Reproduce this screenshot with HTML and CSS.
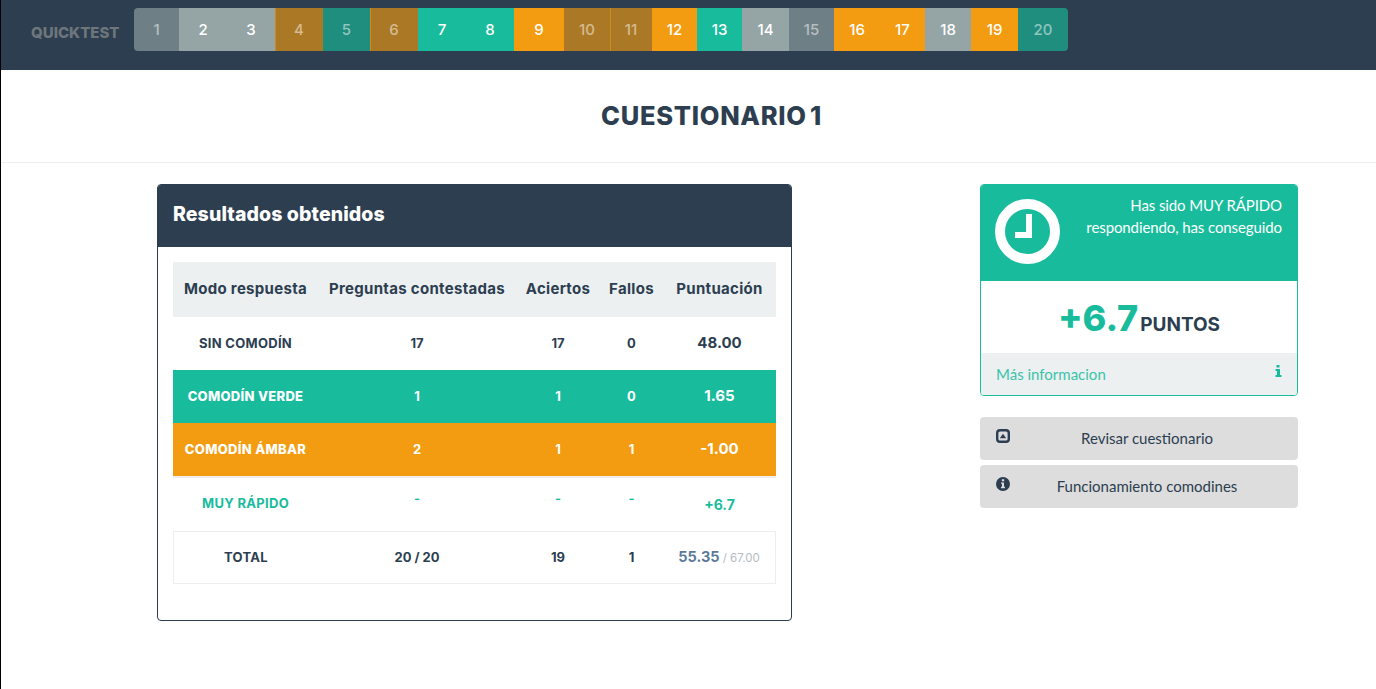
FILE: index.html
```html
<!DOCTYPE html>
<html lang="es">
<head>
<meta charset="utf-8">
<title>Quicktest</title>
<link rel="stylesheet" href="styles.css">
</head>
<body>
<div class="page">
  <header class="topbar">
    <div class="brand">QUICKTEST</div>
    <nav class="steps">
      <a class="step grey dim">1</a><a class="step grey">2</a><a class="step grey">3</a><a class="step amber dim edge">4</a><a class="step teal dim">5</a><a class="step amber dim edge">6</a><a class="step teal">7</a><a class="step teal">8</a><a class="step amber">9</a><a class="step amber dim">10</a><a class="step amber dim edge">11</a><a class="step amber">12</a><a class="step teal">13</a><a class="step grey">14</a><a class="step grey dim">15</a><a class="step amber">16</a><a class="step amber">17</a><a class="step grey">18</a><a class="step amber">19</a><a class="step teal dim">20</a>
    </nav>
  </header>
  <div class="title-wrap"><h1 class="title">CUESTIONARIO 1</h1></div>
  <main class="content">
    <section class="panel">
      <h2 class="panel-head">Resultados obtenidos</h2>
      <div class="panel-body">
        <table class="results">
          <thead>
            <tr><th class="c1">Modo respuesta</th><th class="c2">Preguntas contestadas</th><th class="c3">Aciertos</th><th class="c4">Fallos</th><th class="c5">Puntuación</th></tr>
          </thead>
          <tbody>
            <tr><td class="mode">SIN COMODÍN</td><td>17</td><td>17</td><td>0</td><td class="score">48.00</td></tr>
            <tr class="row-teal"><td class="mode">COMODÍN VERDE</td><td>1</td><td>1</td><td>0</td><td class="score">1.65</td></tr>
            <tr class="row-amber"><td class="mode">COMODÍN ÁMBAR</td><td>2</td><td>1</td><td>1</td><td class="score">-1.00</td></tr>
            <tr class="row-fast"><td class="mode">MUY RÁPIDO</td><td class="dash">-</td><td class="dash">-</td><td class="dash">-</td><td class="score-fast">+6.7</td></tr>
            <tr class="row-total"><td class="mode">TOTAL</td><td>20 / 20</td><td>19</td><td>1</td><td class="total"><b>55.35</b> <span>/ 67.00</span></td></tr>
          </tbody>
        </table>
      </div>
    </section>
    <aside class="side">
      <div class="bonus">
        <div class="bonus-top">
          <svg class="clock" viewBox="0 0 65 65" aria-hidden="true"><circle cx="32.5" cy="32.5" r="27.5" fill="none" stroke="#fff" stroke-width="10"/><path d="M37 15h-6v18h-11v6h17z" fill="#fff"/></svg>
          <p class="bonus-text">Has sido MUY RÁPIDO<br>respondiendo, has conseguido</p>
        </div>
        <div class="bonus-points"><span class="points">+6.7</span> <span class="label">PUNTOS</span></div>
        <div class="bonus-foot"><span>Más informacion</span>
          <svg class="info" viewBox="0 0 7 12" aria-hidden="true"><path d="M1.500 0h3v2.500h-3zM.5 4h4.500v6h1.500v2h-6v-2h1.500v-4h-1.500z" fill="#18bc9c"/></svg>
        </div>
      </div>
      <a class="btn">
        <svg class="btn-icon" viewBox="0 0 14 14" aria-hidden="true"><rect x="1.200" y="1.200" width="11.600" height="11.600" rx="2.800" fill="none" stroke="#2c3e50" stroke-width="2.400"/><path d="M3.800 9.300 7 4.800l3.200 4.500z" fill="#2c3e50"/></svg>
        Revisar cuestionario</a>
      <a class="btn">
        <svg class="btn-icon" viewBox="0 0 14 14" aria-hidden="true"><path fill-rule="evenodd" d="M7 0a7 7 0 1 1 0 14A7 7 0 0 1 7 0zM5.800 2.300v2h2.400v-2zM5 5.500v1.300h1v3H5v1.400h4V9.800H8V5.500z" fill="#2c3e50"/></svg>
        Funcionamiento comodines</a>
    </aside>
  </main>
</div>
</body>
</html>
```

FILE: styles.css
```css
* { box-sizing: border-box; }
html, body { margin: 0; height: 100%; }
body { background: #fff; font-family: "Lato", sans-serif; color: #2c3e50; overflow: hidden; }
.page { min-height: 689px; border-left: 1px solid #000; }

.topbar { height: 70px; background: #2c3e50; display: flex; align-items: flex-start; }
.brand { width: 133px; padding: 25px 0 0 30px; font: 800 15px/16px "Inter", sans-serif; color: #6e767c; }
.steps {
  margin-top: 8px; height: 43px; display: grid; overflow: hidden; border-radius: 4px;
  grid-template-columns: 45px 48px 48px 48px 47px 48px 48px 48px 50px 46px 42px 45px 45px 47px 45px 46px 45px 46px 47px 50px;
}
.step { display: flex; align-items: center; justify-content: center; font: 500 15px/1 "Inter", sans-serif; color: #fff; padding-bottom: 1px; }
.step.grey { background: #95a5a6; }
.step.teal { background: #18bc9c; }
.step.amber { background: #f39c12; }
.step.dim { color: rgba(255, 255, 255, .5); }
.step.grey.dim { background: #6f7f86; }
.step.teal.dim { background: #208e7e; }
.step.amber.dim { background: #ab7825; }
.step.edge { box-shadow: inset 1px 0 0 #c98c1d; }

.title-wrap { height: 93px; border-bottom: 1px solid #eee; display: flex; justify-content: center; padding: 0 0 0 46px; }
.title { margin: 0; padding-top: 31px; font: 800 25.500px/30px "Inter", sans-serif; color: #2c3e50; letter-spacing: .7px; word-spacing: -3px; }

.content { display: flex; align-items: flex-start; padding: 21px 0 0 156px; }
.panel { width: 635px; height: 437px; border: 1px solid #2c3e50; border-radius: 4px; overflow: hidden; margin-right: 188px; }
.panel-head { margin: 0; height: 62px; background: #2c3e50; color: #fff; padding: 17px 0 0 15px; font: 800 19.500px/24px "Inter", sans-serif; letter-spacing: .1px; }
.panel-body { padding: 15px; }

.results { width: 603px; border-collapse: separate; border-spacing: 0; table-layout: fixed; font-family: "Inter", sans-serif; font-size: 13px; font-weight: 700; color: #2c3e50; text-align: center; }
.results th { height: 55px; background: #ecf0f1; font-size: 15px; font-weight: 700; letter-spacing: .3px; padding: 0 0 2px; }
.results td { height: 53px; padding: 0 0 2px; }
.c1 { width: 145px; } .c2 { width: 198px; } .c3 { width: 84px; } .c4 { width: 63px; } .c5 { width: 113px; }
.results .mode { font-size: 13px; letter-spacing: .3px; }
.results .score { font-size: 15px; }
.results .row-teal .mode, .results .row-amber .mode { font-weight: 800; }
.row-teal td { background: #18bc9c; color: #fff; }
.row-amber td { background: #f39c12; color: #fff; }
.results .row-fast td { height: 55px; color: #18bc9c; border-top: 2px solid #eee; padding: 0 0 3px; }
.results .row-fast .dash { font-weight: 600; padding-bottom: 14px; }
.results .row-fast .score-fast { font-size: 14px; padding: 0 0 1px; }
.row-total td { border-top: 1px solid #eee; border-bottom: 1px solid #eee; }
.row-total td:first-child { border-left: 1px solid #eee; }
.row-total td:last-child { border-right: 1px solid #eee; }
.total b { color: #5a7a9c; font-size: 14.500px; font-weight: 700; }
.total span { color: #b4bcc2; font-size: 11.500px; font-weight: 400; }

.side { width: 318px; }
.bonus { height: 212px; border: 1px solid #18bc9c; border-radius: 4px; overflow: hidden; display: flex; flex-direction: column; margin-bottom: 21px; }
.bonus-top { height: 96px; background: #18bc9c; color: #fff; display: flex; align-items: flex-start; justify-content: space-between; padding: 14px 15px 0 14px; }
.clock { width: 65px; height: 65px; }
.bonus-text { margin: -5px 0 0; text-align: right; font-size: 15px; line-height: 22px; letter-spacing: -.1px; }
.bonus-points { height: 72px; display: flex; align-items: center; justify-content: center; gap: 2px; font-family: "Inter", sans-serif; padding-top: 2px; }
.points { color: #18bc9c; font-size: 36px; font-weight: 800; }
.label { color: #2c3e50; font-size: 19px; font-weight: 700; padding-top: 12px; }
.bonus-foot { flex: 1; background: #ecf0f1; color: #18bc9c; font-size: 15px; display: flex; justify-content: space-between; padding: 12px 15px 0; }
.bonus-foot span { opacity: .85; }
.info { width: 7px; height: 12px; }
.btn { position: relative; display: block; height: 43px; margin-bottom: 5px; padding-left: 16px; background: #ddd; border-radius: 4px; text-align: center; font-size: 15px; line-height: 43px; color: #2c3e50; }
.btn-icon { position: absolute; left: 16px; top: 12px; width: 14px; height: 14px; }
```
